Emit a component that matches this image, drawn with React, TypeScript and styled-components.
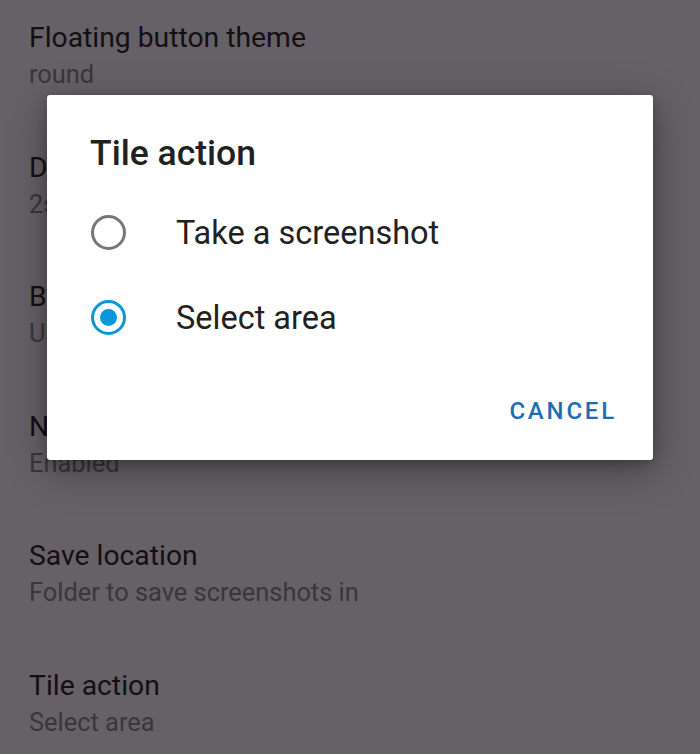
import React from "react";
import styled, { createGlobalStyle } from "styled-components";

const Global = createGlobalStyle`
  html, body { margin: 0; padding: 0; }
  body { width: 700px; height: 754px; overflow: hidden; background: #fafafa; font-family: Roboto, "Noto Sans", sans-serif; }
`;

const Screen = styled.div`
  position: relative;
  width: 700px;
  height: 754px;
  overflow: hidden;
  background: #fafafa;
`;

const List = styled.div`
  display: flex;
  flex-direction: column;
  padding: 20px 29px 0;
`;

const Item = styled.div`
  display: flex;
  flex-direction: column;
  height: 129.6px;
  flex-shrink: 0;
`;

const ItemTitle = styled.div`
  font-size: 28.3px;
  line-height: 36px;
  color: #000;
  white-space: nowrap;
`;

const ItemSub = styled.div`
  font-size: 25.4px;
  line-height: 36px;
  color: #787878;
  white-space: nowrap;
`;

const Scrim = styled.div`
  position: absolute;
  inset: 0;
  background: rgba(30, 22, 30, 0.676);
`;

const Dialog = styled.div`
  position: absolute;
  left: 47px;
  top: 95px;
  width: 606px;
  height: 365px;
  background: #fff;
  border-radius: 3px;
  box-shadow: 0 10px 40px rgba(0, 0, 0, 0.35), 0 4px 12px rgba(0, 0, 0, 0.2);
  display: flex;
  flex-direction: column;
  box-sizing: border-box;
`;

const DialogTitle = styled.div`
  font-size: 35.5px;
  font-weight: 500;
  color: #212121;
  padding: 38px 0 0 43px;
  line-height: 40px;
  white-space: nowrap;
`;

const Options = styled.div`
  display: flex;
  flex-direction: column;
  padding-top: 17px;
`;

const Option = styled.div`
  display: flex;
  align-items: center;
  height: 85px;
  padding-left: 44px;
`;

const RadioOuter = styled.div<{ $on: boolean }>`
  width: 35px;
  height: 35px;
  box-sizing: border-box;
  border-radius: 50%;
  border: 3px solid ${(p) => (p.$on ? "#0a97d9" : "#767676")};
  display: flex;
  align-items: center;
  justify-content: center;
  flex-shrink: 0;
`;

const RadioDot = styled.div`
  width: 17px;
  height: 17px;
  border-radius: 50%;
  background: #0a97d9;
`;

const OptionLabel = styled.div`
  font-size: 32.5px;
  color: #212121;
  margin-left: 50px;
  white-space: nowrap;
`;

const Actions = styled.div`
  display: flex;
  justify-content: flex-end;
  padding: 0 36px 0 0;
  margin-top: auto;
  height: 98px;
  align-items: center;
`;

const Button = styled.div`
  font-size: 24px;
  font-weight: 500;
  letter-spacing: 2.8px;
  color: #1b6eb5;
`;

const items = [
  ["Floating button theme", "round"],
  ["Delay", "2s"],
  ["Button", "Use"],
  ["Notification", "Enabled"],
  ["Save location", "Folder to save screenshots in"],
  ["Tile action", "Select area"],
];

export default function App() {
  return (
    <Screen>
      <Global />
      <List>
        {items.map(([t, s]) => (
          <Item key={t}>
            <ItemTitle>{t}</ItemTitle>
            <ItemSub>{s}</ItemSub>
          </Item>
        ))}
      </List>
      <Scrim />
      <Dialog>
        <DialogTitle>Tile action</DialogTitle>
        <Options>
          <Option>
            <RadioOuter $on={false} />
            <OptionLabel>Take a screenshot</OptionLabel>
          </Option>
          <Option>
            <RadioOuter $on={true}>
              <RadioDot />
            </RadioOuter>
            <OptionLabel>Select area</OptionLabel>
          </Option>
        </Options>
        <Actions>
          <Button>CANCEL</Button>
        </Actions>
      </Dialog>
    </Screen>
  );
}
